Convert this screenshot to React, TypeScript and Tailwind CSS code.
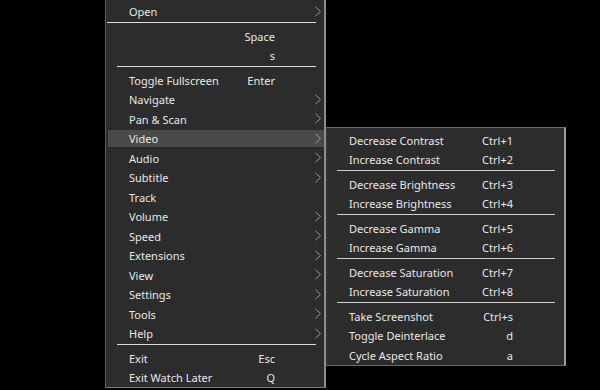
type Item =
  | { kind: "item"; label: string; shortcut?: string; sub?: boolean; active?: boolean }
  | { kind: "sep"; full?: boolean };

const mainItems: Item[] = [
  { kind: "item", label: "Open", sub: true },
  { kind: "sep", full: true },
  { kind: "item", label: "", shortcut: "Space" },
  { kind: "item", label: "", shortcut: "s" },
  { kind: "sep" },
  { kind: "item", label: "Toggle Fullscreen", shortcut: "Enter" },
  { kind: "item", label: "Navigate", sub: true },
  { kind: "item", label: "Pan & Scan", sub: true },
  { kind: "item", label: "Video", sub: true, active: true },
  { kind: "item", label: "Audio", sub: true },
  { kind: "item", label: "Subtitle", sub: true },
  { kind: "item", label: "Track" },
  { kind: "item", label: "Volume", sub: true },
  { kind: "item", label: "Speed", sub: true },
  { kind: "item", label: "Extensions", sub: true },
  { kind: "item", label: "View", sub: true },
  { kind: "item", label: "Settings", sub: true },
  { kind: "item", label: "Tools", sub: true },
  { kind: "item", label: "Help", sub: true },
  { kind: "sep" },
  { kind: "item", label: "Exit", shortcut: "Esc" },
  { kind: "item", label: "Exit Watch Later", shortcut: "Q" },
];

const videoItems: Item[] = [
  { kind: "item", label: "Decrease Contrast", shortcut: "Ctrl+1" },
  { kind: "item", label: "Increase Contrast", shortcut: "Ctrl+2" },
  { kind: "sep" },
  { kind: "item", label: "Decrease Brightness", shortcut: "Ctrl+3" },
  { kind: "item", label: "Increase Brightness", shortcut: "Ctrl+4" },
  { kind: "sep" },
  { kind: "item", label: "Decrease Gamma", shortcut: "Ctrl+5" },
  { kind: "item", label: "Increase Gamma", shortcut: "Ctrl+6" },
  { kind: "sep" },
  { kind: "item", label: "Decrease Saturation", shortcut: "Ctrl+7" },
  { kind: "item", label: "Increase Saturation", shortcut: "Ctrl+8" },
  { kind: "sep" },
  { kind: "item", label: "Take Screenshot", shortcut: "Ctrl+s" },
  { kind: "item", label: "Toggle Deinterlace", shortcut: "d" },
  { kind: "item", label: "Cycle Aspect Ratio", shortcut: "a" },
];

function Chevron() {
  return (
    <svg width="8" height="11" viewBox="0 0 8 11" className="shrink-0">
      <path d="M1.5 0.8 L6.5 5.5 L1.5 10.2" fill="none" stroke="#9a9a9a" strokeWidth="1" />
    </svg>
  );
}

function MainRow({ item }: { item: Item }) {
  if (item.kind === "sep") {
    return (
      <div className={item.full ? "h-[5px] pt-[1px] pl-[1px] pr-[8px]" : "h-[5px] pt-[1px] pl-[11px] pr-[8px]"}>
        <div className="h-px bg-[#dcdcdc]" />
      </div>
    );
  }
  return (
    <div className="h-[19.5px] py-[1.5px] pl-[2px]">
      <div className={`flex h-full items-center ${item.active ? "bg-[#4a4a4a]" : ""}`}>
        <span className="flex-1 pl-[21px] pt-[1px] whitespace-nowrap">{item.label}</span>
        <span className="pt-[1px] whitespace-nowrap text-right">{item.shortcut ?? ""}</span>
        <div className="flex w-[49px] justify-end pr-[2px]">{item.sub && <Chevron />}</div>
      </div>
    </div>
  );
}

function SubRow({ item }: { item: Item }) {
  if (item.kind === "sep") {
    return (
      <div className="h-[5px] pt-[1px] pl-[10px] pr-[9px]">
        <div className="h-px bg-[#d0d0d0]" />
      </div>
    );
  }
  return (
    <div className="flex h-[19.5px] items-center pt-[1px]">
      <span className="flex-1 pl-[22px] whitespace-nowrap">{item.label}</span>
      <span className="pr-[51px] whitespace-nowrap text-right">{item.shortcut}</span>
    </div>
  );
}

export default function App() {
  return (
    <div
      className="relative h-[390px] w-[600px] overflow-hidden bg-black text-[11px] leading-none text-[#e8e8e8]"
      style={{ fontFamily: '"Noto Sans", "Open Sans", sans-serif' }}
    >
      {/* main context menu */}
      <div className="absolute left-[105px] top-[-2px] w-[221px] border-b border-l border-r-2 border-b-[#7a7a7a] border-l-[#5c5c5c] border-r-[#8c8c8c] bg-[#2c2c2c] pt-[3.5px]">
        {mainItems.map((it, i) => (
          <MainRow key={i} item={it} />
        ))}
      </div>

      {/* video submenu */}
      <div className="absolute left-[326px] top-[127px] w-[240px] border-t border-l border-b border-r-2 border-t-[#6a6a6a] border-l-[#3a3a3a] border-b-[#6a6a6a] border-r-[#9a9a9a] bg-[#2c2c2c] pt-[2px]">
        {videoItems.map((it, i) => (
          <SubRow key={i} item={it} />
        ))}
      </div>
    </div>
  );
}
